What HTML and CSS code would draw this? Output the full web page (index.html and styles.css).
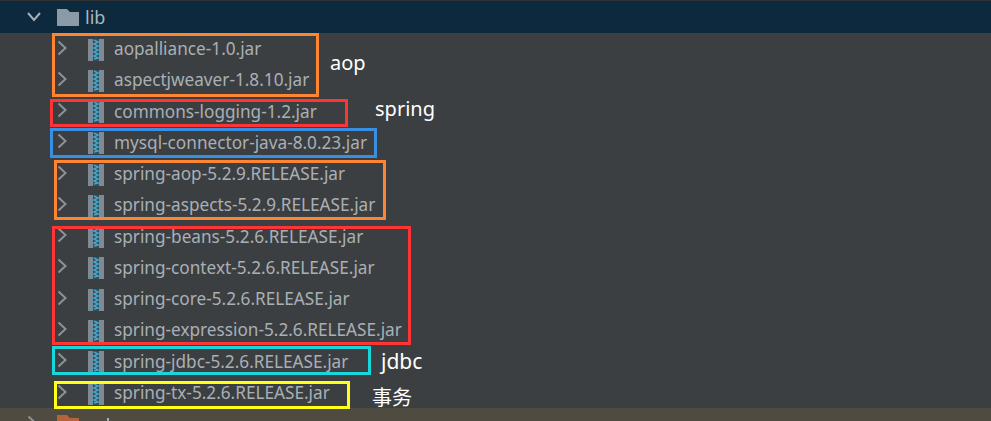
FILE: index.html
```html
<!DOCTYPE html>
<html lang="en">
<head>
    <meta charset="UTF-8">
    <meta name="viewport" content="width=device-width, initial-scale=1.0">
    <title>lib</title>
    <link rel="stylesheet" href="styles.css">
</head>
<body>
    <svg class="icon-defs" width="0" height="0">
        <symbol id="chevron-right" viewBox="0 0 14 16">
            <path d="M2.5 1.5l7 6.5-7 6.5" fill="none" stroke="#8f9294" stroke-width="2"/>
        </symbol>
        <symbol id="jar" viewBox="0 0 18 24">
            <rect x="1" y="1" width="5" height="22" fill="#7c8b96"/>
            <rect x="12" y="1" width="5" height="22" fill="#7c8b96"/>
            <rect x="6" y="1" width="6" height="22" fill="#3c4a52"/>
            <path d="M7 2l4 2-4 2 4 2-4 2 4 2-4 2 4 2-4 2 4 2-4 1" fill="none" stroke="#3ea6cf" stroke-width="1.6"/>
        </symbol>
    </svg>

    <div class="tree">
        <div class="folder-row">
            <svg class="arrow-down" viewBox="0 0 16 12"><path d="M2 2l6 7 6-7" fill="none" stroke="#a9b0b5" stroke-width="2"/></svg>
            <svg class="folder" viewBox="0 0 22 17"><path d="M0 0h10l3 3h9v14H0z" fill="#8a9aa6"/></svg>
            <span>lib</span>
        </div>
        <ul class="jars">
            <li><svg class="arrow"><use href="#chevron-right"/></svg><svg class="jar"><use href="#jar"/></svg><span>aopalliance-1.0.jar</span></li>
            <li><svg class="arrow"><use href="#chevron-right"/></svg><svg class="jar"><use href="#jar"/></svg><span>aspectjweaver-1.8.10.jar</span></li>
            <li><svg class="arrow"><use href="#chevron-right"/></svg><svg class="jar"><use href="#jar"/></svg><span>commons-logging-1.2.jar</span></li>
            <li><svg class="arrow"><use href="#chevron-right"/></svg><svg class="jar"><use href="#jar"/></svg><span>mysql-connector-java-8.0.23.jar</span></li>
            <li><svg class="arrow"><use href="#chevron-right"/></svg><svg class="jar"><use href="#jar"/></svg><span>spring-aop-5.2.9.RELEASE.jar</span></li>
            <li><svg class="arrow"><use href="#chevron-right"/></svg><svg class="jar"><use href="#jar"/></svg><span>spring-aspects-5.2.9.RELEASE.jar</span></li>
            <li><svg class="arrow"><use href="#chevron-right"/></svg><svg class="jar"><use href="#jar"/></svg><span>spring-beans-5.2.6.RELEASE.jar</span></li>
            <li><svg class="arrow"><use href="#chevron-right"/></svg><svg class="jar"><use href="#jar"/></svg><span>spring-context-5.2.6.RELEASE.jar</span></li>
            <li><svg class="arrow"><use href="#chevron-right"/></svg><svg class="jar"><use href="#jar"/></svg><span>spring-core-5.2.6.RELEASE.jar</span></li>
            <li><svg class="arrow"><use href="#chevron-right"/></svg><svg class="jar"><use href="#jar"/></svg><span>spring-expression-5.2.6.RELEASE.jar</span></li>
            <li><svg class="arrow"><use href="#chevron-right"/></svg><svg class="jar"><use href="#jar"/></svg><span>spring-jdbc-5.2.6.RELEASE.jar</span></li>
            <li><svg class="arrow"><use href="#chevron-right"/></svg><svg class="jar"><use href="#jar"/></svg><span>spring-tx-5.2.6.RELEASE.jar</span></li>
        </ul>
        <div class="next-row">
            <svg class="arrow"><use href="#chevron-right"/></svg>
            <svg class="folder" viewBox="0 0 22 17"><path d="M0 0h10l3 3h9v14H0z" fill="#b5643a"/></svg>
            <div class="cut-label"></div>
        </div>
    </div>

    <!-- annotations drawn over the tree -->
    <div class="mark mark-aop"></div>
    <div class="mark mark-logging"></div>
    <div class="mark mark-mysql"></div>
    <div class="mark mark-aop2"></div>
    <div class="mark mark-spring"></div>
    <div class="mark mark-jdbc"></div>
    <div class="mark mark-tx"></div>

    <span class="note note-aop">aop</span>
    <span class="note note-spring">spring</span>
    <span class="note note-jdbc">jdbc</span>
    <span class="note note-tx">事务</span>
</body>
</html>
```

FILE: styles.css
```css
body {
    margin: 0;
    height: 421px;
    overflow: hidden;
    position: relative;
    background: #3c3f41;
    font-family: "Noto Sans", "Noto Sans CJK SC", sans-serif;
}

.icon-defs {
    position: absolute;
}

.tree {
    display: flex;
    flex-direction: column;
    height: 421px;
}

/* selected row */
.folder-row {
    display: flex;
    align-items: center;
    height: 32px;
    border-top: 1px solid #2f3234;
    background: #0d293e;
    color: #a9b7c0;
    font-size: 18px;
}

.arrow-down {
    width: 16px;
    height: 12px;
    margin-left: 26px;
}

.folder-row .folder {
    width: 22px;
    height: 17px;
    margin-left: 15px;
}

.folder-row span {
    margin-left: 6px;
}

.jars {
    list-style: none;
    margin: 0;
    padding: 0;
    color: #a9b0b5;
    font-size: 17.2px;
}

.jars li {
    display: flex;
    align-items: center;
    height: 31.27px;
    padding-left: 56px;
}

.arrow {
    width: 14px;
    height: 16px;
    flex: none;
    margin-bottom: 2px;
}

.jar {
    width: 18px;
    height: 24px;
    flex: none;
    margin-left: 17px;
    margin-top: 2px;
}

.jars span {
    margin-left: 9px;
    line-height: 1;
}

.next-row {
    display: flex;
    align-items: flex-start;
    flex: 1;
    background: #4f4b41;
    padding: 7px 0 0 26px;
    overflow: hidden;
}

.next-row .folder {
    width: 22px;
    height: 17px;
    margin-left: 17px;
}

/* only the top of the next row's label shows above the window edge */
.cut-label {
    width: 2px;
    height: 4px;
    margin: 3px 0 0 28px;
    background: #a9b0b5;
}

.mark {
    position: absolute;
    box-sizing: border-box;
    border: 3px solid;
}

.mark-aop { left: 52px; top: 33px; width: 267px; height: 64px; border-color: #ff8533; }
.mark-logging { left: 50px; top: 99px; width: 298px; height: 28px; border-color: #ff3535; }
.mark-mysql { left: 50px; top: 128px; width: 327px; height: 30px; border-color: #3a8fe0; }
.mark-aop2 { left: 54px; top: 160px; width: 332px; height: 60px; border-color: #ff8533; }
.mark-spring { left: 52px; top: 226px; width: 359px; height: 119px; border-color: #ff3535; }
.mark-jdbc { left: 52px; top: 346px; width: 319px; height: 29px; border-color: #17d6dc; }
.mark-tx { left: 54px; top: 381px; width: 296px; height: 28px; border-color: #ffff1a; }

.note {
    position: absolute;
    color: #fff;
    font-size: 20px;
    line-height: 26px;
}

.note-aop { left: 330px; top: 50px; }
.note-spring { left: 375px; top: 96px; }
.note-jdbc { left: 381px; top: 348px; font-size: 21px; }
.note-tx { left: 372px; top: 385px; }
```
